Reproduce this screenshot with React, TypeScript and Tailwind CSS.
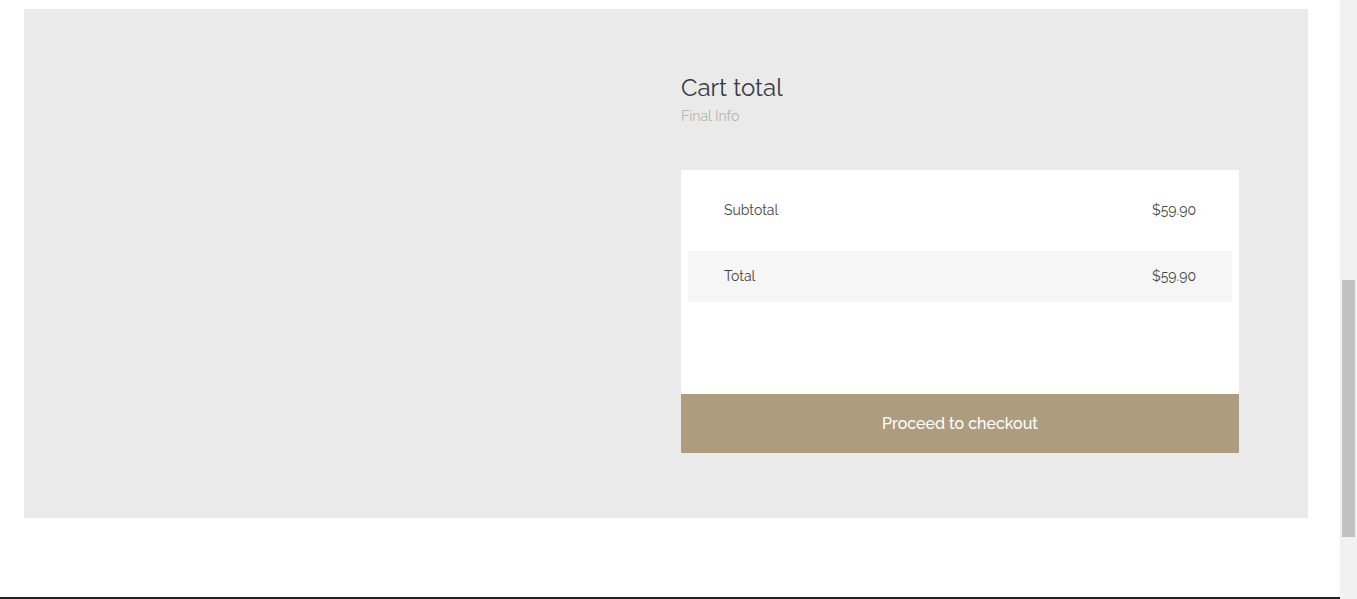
export default function App() {
  const font = { fontFamily: 'Raleway, Lato, "Open Sans", sans-serif' }

  return (
    <div className="flex h-[599px] w-[1357px] overflow-hidden bg-white" style={font}>
      {/* Page */}
      <div className="flex w-[1340px] flex-col">
        <div className="pl-[24px] pr-[32px] pt-[9px]">
          <section className="h-[509px] bg-[#eaeaea] pl-[657px] pt-[64px]">
            <h2 className="text-[24px] leading-[30px] text-[#3a3a44]">Cart total</h2>
            <p className="mt-[3px] text-[14px] leading-[20px] text-[#b3b3b3]">Final Info</p>

            <div className="mt-[44px] w-[558px] bg-white">
              <div className="px-[7px] pt-[15px] pb-[92px]">
                <div className="flex h-[51px] items-center justify-between px-[36px] text-[14px] text-[#454545]">
                  <span>Subtotal</span>
                  <span>$59.90</span>
                </div>
                <div className="mt-[15px] flex h-[51px] items-center justify-between bg-[#f6f6f6] px-[36px] text-[14px] text-[#454545]">
                  <span>Total</span>
                  <span>$59.90</span>
                </div>
              </div>
              <button className="flex h-[59px] w-full items-center justify-center bg-[#ae9c7f] text-[16px] font-medium text-white">
                Proceed to checkout
              </button>
            </div>
          </section>
        </div>
        <div className="flex-1" />
        <div className="h-[2px] bg-[#222222]" />
      </div>

      {/* Scrollbar */}
      <div className="w-[17px] bg-[#f1f1f1] px-[2px] pt-[280px]">
        <div className="h-[257px] bg-[#c1c1c1]" />
      </div>
    </div>
  )
}
